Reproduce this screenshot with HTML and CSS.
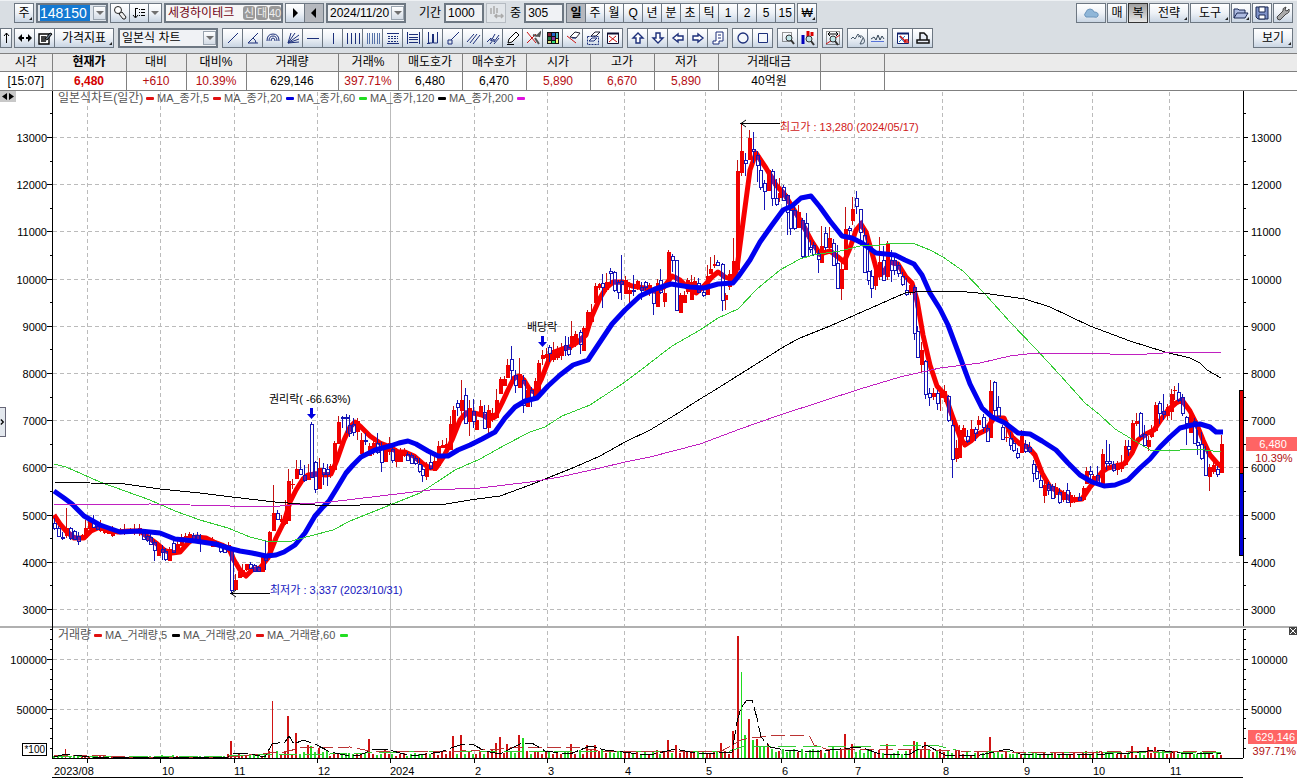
FILE: index.html
```html
<!DOCTYPE html>
<html lang="ko">
<head>
<meta charset="utf-8">
<title>세경하이테크 148150</title>
<link rel="stylesheet" href="styles.css">
</head>
<body>
<header class="bars">
  <div class="bar">
    <button class="btn more">주</button>
    <div class="box code"><input class="code-input" aria-label="종목코드" value="148150"><button class="drop" aria-label="종목 목록"></button></div>
    <div class="group">
      <button class="btn" aria-label="검색"><svg class="ic" viewBox="0 0 16 16"><circle cx="6" cy="5" r="3.5" fill="#fff" stroke="#222"/><path d="M8 8l2-1 4 5-1 2-2 0-4-5z" fill="#eee" stroke="#222"/></svg></button>
      <button class="btn" aria-label="정렬"><svg class="ic" viewBox="0 0 16 16"><path d="M4.5 3v9M2 10l2.500 3 2.500-3M4 3.500h3" fill="none" stroke="#000"/><path d="M8 4.500h1M8 7.500h1M8 10.500h1M10 4.500h4M10 7.500h4M10 10.500h4" stroke="#000"/></svg></button>
      <button class="btn slim" aria-label="정렬 선택"><span class="tri"></span></button>
    </div>
    <div class="box name"><span>세경하이테크</span><b>신</b><b>대</b><b>40</b></div>
    <div class="group">
      <button class="btn" aria-label="다음"><svg class="ic" viewBox="0 0 16 16"><path d="M6 3l5 5-5 5z"/></svg></button>
      <button class="btn pressed" aria-label="이전"><svg class="ic" viewBox="0 0 16 16"><path d="M10 3L5 8l5 5z"/></svg></button>
    </div>
    <div class="box date"><input aria-label="날짜" value="2024/11/20"><button class="drop" aria-label="날짜 선택"></button></div>
    <label class="lead" for="period">기간</label>
    <input class="box num" id="period" value="1000">
    <button class="btn faded" aria-label="기간 맞춤"><svg class="ic" viewBox="0 0 16 16"><path d="M3 3v6M6 1v8M9 3v5M7 11h8M9 9l-2 2 2 2M13 9l2 2-2 2" fill="none" stroke="#aaa" stroke-width="1.5"/></svg></button>
    <label for="count">중</label>
    <input class="box num" id="count" value="305">
    <div class="group">
      <button class="btn pressed strong">일</button><button class="btn">주</button><button class="btn">월</button><button class="btn">Q</button><button class="btn">년</button><button class="btn">분</button><button class="btn">초</button><button class="btn">틱</button><button class="btn">1</button><button class="btn">2</button><button class="btn">5</button><button class="btn">15</button>
    </div>
    <button class="btn more">₩</button>
    <div class="right">
      <button class="btn w30" aria-label="클라우드"><svg class="ic" viewBox="0 0 16 16"><path d="M3 12q-3-2 0-5 1-3 4-3t4 3q5 0 4 4-1 2-4 1z" fill="#8fb6d8" stroke="#6d96bd"/></svg></button>
      <button class="btn">매</button>
      <button class="btn dark">복</button>
      <button class="btn w40 more">전략</button>
      <button class="btn w40 more">도구</button>
      <button class="btn more" aria-label="열기"><svg class="ic" viewBox="0 0 16 16"><path d="M1 13V4h4l1 1h6v3M1 13L4 8h11l-3 5z" fill="#aebbe0" stroke="#1c2a55"/></svg></button>
      <button class="btn" aria-label="저장"><svg class="ic" viewBox="0 0 16 16"><path d="M2 2h12v12H4l-2-2z" fill="#7f92c8" stroke="#1c2a55"/><path d="M5 2h6v5H5zM5 10h6v4H5z" fill="#fff" stroke="#1c2a55"/></svg></button>
      <button class="btn" aria-label="설정"><svg class="ic" viewBox="0 0 16 16"><path d="M2 12l6-6q-1-3 3-4l-1 3 2 1 2-2q1 4-3 5l-6 6q-3 0-3-3z" fill="#aaa" stroke="#444"/></svg></button>
    </div>
  </div>
  <div class="bar second">
    <button class="btn slim" aria-label="위로"><svg class="ic" viewBox="0 0 16 16"><path d="M8.500 13V3M6 6l2.500-3L11 6" fill="none" stroke="#000"/></svg></button>
    <div class="group">
      <button class="btn" aria-label="좌우 이동"><svg class="ic" viewBox="0 0 16 16"><path d="M1 8l4-4v3h2v2H5v3zM15 8l-4-4v3H9v2h2v3z"/></svg></button>
      <button class="btn" aria-label="설정 편집"><svg class="ic" viewBox="0 0 16 16"><path d="M2 4h10v10H2zM4 7h5M4 9h4M4 11h5" fill="#fff" stroke="#000" stroke-width="1.4"/><path d="M8 9l5-6 2 1-5 6z" fill="#678" stroke="#000"/></svg></button>
      <button class="btn w60 more">가격지표</button>
    </div>
    <div class="box type"><select aria-label="차트 종류"><option>일본식 차트</option></select><span class="drop"></span></div>
    <div class="group" id="tools-a"></div>
    <div class="group" id="tools-b"></div>
    <div class="group" id="tools-c"></div>
    <div class="group" id="tools-d"></div>
    <div class="group" id="tools-e"></div>
    <div class="group" id="tools-f"></div>
    <div class="group" id="tools-g"></div>
    <div class="right"><button class="btn w40 more">보기</button></div>
  </div>
</header>
<table class="quote">
  <colgroup><col class="c52"><col class="c74"><col class="c60"><col class="c60"><col class="c92"><col class="c60"><col class="c64"><col class="c64"><col class="c64"><col class="c64"><col class="c64"><col class="c102"><col class="c64"><col></colgroup>
  <thead><tr><th>시각</th><th class="bold">현재가</th><th>대비</th><th>대비%</th><th>거래량</th><th>거래%</th><th>매도호가</th><th>매수호가</th><th>시가</th><th>고가</th><th>저가</th><th>거래대금</th><th></th><th></th></tr></thead>
  <tbody><tr><td>[15:07]</td><td class="up bold">6,480</td><td class="up">+610</td><td class="up">10.39%</td><td>629,146</td><td class="up">397.71%</td><td>6,480</td><td>6,470</td><td class="up">5,890</td><td class="up">6,670</td><td class="up">5,890</td><td>40억원</td><td></td><td></td></tr></tbody>
</table>
<main class="chart">
  <svg id="chart" viewBox="0 91 1297 687" role="img" aria-label="일봉 차트"></svg>
  <button class="split" aria-label="축 너비 조절"><svg viewBox="0 0 16 11"><path d="M7 2v7L2 5.500zM9 2v7l5-3.500z"/></svg></button>
  <button class="side" aria-label="패널 열기"><svg viewBox="0 0 6 30"><path d="M1 12l3 3-3 3" fill="none" stroke="#000" stroke-width="1.500"/></svg></button>
  <button class="close" aria-label="닫기"><svg viewBox="0 0 8 8"><path d="M1 1l6 6M7 1L1 7" stroke="#fff"/></svg></button>
</main>
<script src="chart.js"></script>
</body>
</html>
```
FILE: styles.css
```css
* { box-sizing: border-box; }
body {
  margin: 0;
  background: #fff;
  color: #000;
  font: 12px/16px "Liberation Sans", "Noto Sans CJK KR", sans-serif;
}
button, input, select { font: inherit; color: inherit; }
.bars {
  background: #d9dee3;
  border-top: 1px solid #eef1f4;
  padding: 2px 4px 5px 0;
}
.bar {
  display: flex;
  align-items: center;
  gap: 2px;
  height: 20px;
  padding-left: 14px;
  white-space: nowrap;
}
.second { margin-top: 5px; padding-left: 0; gap: 4px; }
.right { display: flex; gap: 1px; margin-left: auto; }
.group { display: flex; }
.group .btn + .btn { margin-left: -1px; }
.btn {
  position: relative;
  display: flex;
  align-items: center;
  justify-content: center;
  width: 20px;
  height: 20px;
  padding: 0;
  border: 1px solid #6d7782;
  background: linear-gradient(#fff, #eef2f7 50%, #c9d5e3);
  flex: none;
}
.second .group .btn { width: 21px; }
.second .group .w60 { width: 60px; }
.slim { width: 14px; }
.second > .slim { width: 12px; margin-right: -2px; }
.w30 { width: 30px; }
.w40 { width: 40px; }
.pressed { background: #b5b8be; }
.strong { font-weight: bold; }
.dark { background: linear-gradient(#a0a0a0, #e6e6e6); border-color: #333; }
.faded { border-color: #b5bbc2; background: #e2e6ea; margin-right: 2px; }
.more::after {
  content: "";
  position: absolute;
  right: 1px;
  bottom: 2px;
  border-left: 3px solid transparent;
  border-bottom: 3px solid #222;
}
.ic { width: 16px; height: 16px; display: block; flex: none; }
.box {
  display: flex;
  align-items: center;
  height: 20px;
  border: 2px solid #6d7782;
  background: #f0f2f5;
  padding: 0 0 0 2px;
  flex: none;
}
.box input { border: 0; background: none; padding: 0; width: 100%; min-width: 0; height: 16px; }
.code { width: 72px; background: #dfe5ec; }
.box .code-input { width: 50px; flex: none; background: #1479d2; color: #fff; font-size: 14px; }
.drop {
  width: 13px;
  height: 14px;
  padding: 0;
  border: 1px solid #9aa4af;
  background: linear-gradient(#fff, #d3dbe5);
  margin-left: auto;
  flex: none;
  display: flex;
  align-items: center;
  justify-content: center;
  pointer-events: none;
}
.drop::before, .tri {
  content: "";
  border: 4px solid transparent;
  border-bottom: 0;
  border-top: 4px solid #707070;
}
.name { width: 119px; color: #700010; gap: 1px; background: #f6f6f6; }
.name span { margin-right: auto; }
.name b {
  background: #999;
  color: #eee;
  border-radius: 3px;
  font-weight: normal;
  width: 12px;
  height: 14px;
  font-size: 11px;
  line-height: 14px;
  text-align: center;
}
.date { width: 80px; }
.lead { margin-left: 11px; }
label { margin-right: 1px; }
.num { width: 40px; }
.type { width: 100px; }
.type select { appearance: none; border: 0; background: none; padding: 0; width: 80px; height: 16px; line-height: 16px; }

.quote {
  width: 100%;
  table-layout: fixed;
  border-collapse: collapse;
  line-height: 17px;
}
.quote th, .quote td {
  height: 18px;
  padding: 0;
  border: 1px solid #808080;
  text-align: center;
  font-weight: normal;
}
.quote td { height: 19px; }
.quote th:first-child, .quote td:first-child { border-left: 0; }
.quote th:last-child, .quote td:last-child { border-right: 0; }
.quote th { background: #ebebeb; }
.quote .up { color: #b40d12; }
.quote .bold { font-weight: bold; }
.quote td.bold { color: #d40000; }
.c52 { width: 52px; }
.c60 { width: 60px; }
.c64 { width: 64px; }
.c74 { width: 74px; }
.c92 { width: 92px; }
.c102 { width: 102px; }

.chart { position: relative; }
#chart { display: block; width: 100%; height: auto; font-size: 11px; }
.chart button { position: absolute; padding: 0; border: 0; display: flex; }
.chart button svg { width: 100%; height: 100%; }
.chart .split { left: 0; top: 0; width: 16px; height: 11px; background: #c8c8c8; }
.chart .side { left: 0; top: 46%; width: 6px; height: 30px; background: #e3e8ee; border: 1px solid #667; border-left: 0; }
.chart .close { right: 0; top: 78%; width: 8px; height: 8px; background: #444; }
.sharp { shape-rendering: crispEdges; }
.ko { font-size: 12px; }
.tiny { font-size: 10px; }
.legend { fill: #555; }
.end { text-anchor: end; }
.mid { text-anchor: middle; }
```
FILE: chart.js
```javascript
// Toolbar drawing tools: each entry is the SVG body of one 16x16 icon.
const P = (d, c = '#1c2f7a', f = 'none', w = 1) => `<path d="${d}" stroke="${c}" fill="${f}" stroke-width="${w}"/>`;
const glass = (x, y) => `<circle cx="${x}" cy="${y}" r="3" fill="#bfe6e8" stroke="#333"/>` + P(`M${x + 2} ${y + 2}l3 4`, '#333', 'none', 2);
const tools = {
  a: [
    ['추세선', P('M3 13L13 3')],
    ['각도선', P('M13 3L3 13H13M8 8q3 2 3 5')],
    ['원호', P('M2 11q0-7 6-7t6 7M4 11q0-5 4-5t4 5M6 11q0-3 2-3t2 3')],
    ['팬', P('M3 13L6 3M3 13L10 3M3 13L14 5M3 13L14 9M3 13L14 12')],
    ['수평선', P('M2 8.5H14')],
    ['수직선', P('M8.5 3V14')],
    ['수직 등분', P('M2.5 3V14M6.5 3V14M10.5 3V14M14.5 3V14')],
    ['수직 분할', P('M2.5 3V14M4.5 3V14M7.5 3V14M9.5 3V14M12.5 3V14M14.5 3V14', '#5672a8')],
    ['수평 분할', P('M2 3.5H14M2 13.5H14') + '<path d="M3 6.5H13M3 8.5H13M3 11.5H13" stroke="#1c2f7a" stroke-dasharray="2 1"/>'],
    ['수평 등분', P('M2.5 2V14M14.5 2V14M4 4.5H13M4 7.5H13M4 9.5H13M4 12.5H13')],
    ['삼선', P('M3.5 2v11h4V4M8.5 4v9h4V2M2 13.5h3')],
    ['연결선', P('M6 10L14 2M3 10h4v4H3z')],
    ['평행선', P('M2 12L9 4M5 13L12 4M8 14L15 5')],
    ['평행 채널', P('M2 12l4-4v3l4-7M5 14l4-5v3l5-7M9 14l5-6')],
    ['펜', P('M3 13l1-4 7-7 3 3-7 7zM2 14.5H9', '#000', '#fff')],
    ['도구', P('M2 2L11 13M2 13l9-9', '#c11') + P('M8 5l4 1 3-3-1 4M10 8l4 6', '#555', 'none', 2)],
    ['색상', '<path d="M2 2h12v12H2z" fill="#111"/><path d="M3 3h3v3H3z" fill="#823"/><path d="M7 3h3v3H7z" fill="#26c"/><path d="M11 3h2v5h-2z" fill="#5bb"/><path d="M3 7h3v3H3z" fill="#274"/><path d="M7 7h3v3H7z" fill="#839"/><path d="M3 11h3v2H3z" fill="#dd8"/><path d="M7 11h3v2H7z" fill="#3d7"/><path d="M11 9h2v4h-2z" fill="#ff7"/>'],
    ['지우개', P('M5 7l5-5 5 1-4 5z', '#223', '#fff') + P('M2 6l9 7', '#c11') + P('M7 8h4')],
    ['전체 지우기', P('M6 6l4-4h5l-4 4z', '#223', '#fff') + '<path d="M2.5 6.5h11v8h-11z" fill="none" stroke="#1c2f7a" stroke-dasharray="2 1"/>' + P('M4 11l3-3h5l-3 3z')],
    ['차트 지우기', P('M2.5 3.5h11v10h-11z', '#113', '#fff') + P('M2 3.5H14', '#113', 'none', 2) + P('M4 6l8 6M4 12l7-6', '#c11')]
  ],
  b: [
    ['위', P('M8 3l5 5h-3v5H6V8H3z', '#1c2f7a', '#fff', 1.4)],
    ['아래', P('M8 13l5-5h-3V3H6v5H3z', '#1c2f7a', '#fff', 1.4)],
    ['왼쪽', P('M3 8l5-4v2h5v4H8v2z', '#1c2f7a', '#fff', 1.4)],
    ['오른쪽', P('M13 8L8 4v2H3v4h5v2z', '#1c2f7a', '#fff', 1.4)],
    ['메모', P('M6 2h7v9H9v3H3v-3h3zM8 5h3M8 8h3', '#1c2f7a', '#fff')]
  ],
  c: [['원', '<circle cx="8" cy="8" r="5" fill="#f4f7fb" stroke="#1c2f7a" stroke-width="1.3"/>'], ['사각형', P('M3.5 3.5h9v9h-9z', '#1c2f7a', '#f4f7fb')]],
  d: [
    ['영역 확대', '<path d="M2.5 2.5h9v9h-9z" fill="none" stroke="#333" stroke-dasharray="1 1"/>' + glass(9, 8)],
    ['봉 확대', P('M3 5v9', '#00b', 'none', 3) + P('M8 1v7M12 2v4', '#d00', 'none', 3) + glass(9, 9)]
  ],
  e: [['전체 보기', '<path d="M1.5 1.5h13v13h-13z" fill="none" stroke="#333" stroke-dasharray="1 1"/>' + P('M3 4h10M5 2L3 4l2 2M11 2l2 2-2 2', '#000') + P('M1 14L15 5', '#c11') + glass(8, 9)]],
  f: [['파동', P('M1 9l2-2 2 2 3-5 3 4M8 7q4-3 6 2t-4 5l3-6', '#456')], ['지그재그', P('M1 9l3-2 2 3 2-5 2 5 2-4 2 3', '#345') + P('M1 11.5h13', '#5672d8')]],
  g: [
    ['차트 저장', P('M2.5 3.5h11v10h-11z', '#11206a', '#fff') + P('M2 3.5H14', '#11206a', 'none', 2) + P('M4 6l5 6M4 12l6-6', '#27c') + P('M5 6l6 6M9 12h5M10 10h3', '#c11', 'none', 1.5)],
    ['인쇄', P('M5 10V3h4l3 3v4zM2 10h12v3H2z', '#111', '#e8edf6', 1.5)]
  ]
};
for (const key in tools) {
  document.getElementById('tools-' + key).innerHTML = tools[key]
    .map(([label, body]) => `<button class="btn" aria-label="${label}"><svg class="ic" viewBox="0 0 16 16">${body}</svg></button>`).join('');
}

// Candles: x high bodyTop bodyBottom low
const up = `66 508 528 536 538|82 534 535 538 539|85 520 528 538 538|89 518 521 529 529|100 520 526 531 532|104 529 530 533 534|108 529 530 534 534|112 526 531 536 537|116 529 530 533 534|120 528 530 532 533|124 524 529 531 535|130 528 530 532 534|134 524 529 532 535|139 524 528 533 536|158 543 545 556 556|169 547 549 561 561|177 540 544 553 553|181 534 537 546 546|185 533 536 542 543|189 532 534 541 541|204 536 537 543 544|208 537 540 543 545|212 537 540 547 547|228 542 545 552 552|235 574 580 590 590|239 570 572 578 578|242 564 570 577 577|246 564 564 570 571|262 556 557 572 572|269 531 532 557 557|273 485 513 531 531|281 515 519 522 523|285 500 515 524 525|288 469 481 521 521|292 479 484 485 489|296 460 469 479 479|308 464 474 480 480|319 458 468 489 489|330 464 466 475 478|334 441 443 470 470|338 416 422 444 444|357 418 421 432 440|361 433 440 454 454|369 443 446 456 456|373 437 443 450 455|385 443 447 462 462|389 437 443 452 455|396 448 450 462 467|400 448 450 462 462|404 448 450 456 457|426 462 466 477 480|434 456 461 471 471|438 441 446 466 466|442 440 445 448 448|446 438 444 448 450|450 416 424 450 450|453 406 410 433 433|461 380 400 411 415|469 400 408 422 436|476 414 420 430 430|480 400 406 415 417|488 405 410 428 438|492 408 413 420 422|496 389 400 418 418|500 377 379 394 394|504 376 379 386 386|507 359 365 378 378|519 358 374 388 388|527 386 390 407 407|535 378 381 399 399|538 360 363 394 394|542 350 355 359 365|546 348 354 358 362|553 342 350 360 362|557 346 350 358 360|561 343 350 356 360|571 321 336 347 350|575 331 334 345 347|583 326 328 351 351|587 310 312 330 330|591 304 312 322 322|595 283 286 303 303|599 283 284 288 290|606 273 282 290 292|625 276 280 294 294|629 282 290 294 303|637 280 281 288 290|649 283 285 292 296|657 279 283 307 307|664 288 293 302 307|668 250 252 283 283|680 293 295 313 313|684 291 295 303 303|687 278 280 292 294|691 275 282 300 300|694 277 281 290 292|707 265 276 295 295|710 257 269 274 274|714 255 264 266 268|725 293 295 300 310|729 270 274 287 290|733 238 261 282 282|737 160 171 270 270|741 124 151 173 176|749 130 138 160 160|768 168 170 191 191|779 178 193 198 202|798 205 212 228 228|821 226 246 263 263|829 227 238 248 250|841 262 269 289 300|845 207 229 270 270|852 197 209 221 225|875 262 265 286 290|879 237 262 277 280|887 241 243 277 280|910 280 285 293 295|921 342 350 365 372|933 388 393 397 400|940 390 393 398 411|944 385 391 398 402|956 440 448 459 462|959 425 430 458 458|963 425 428 437 447|971 420 429 441 441|978 416 420 425 430|990 380 391 438 438|1006 430 437 438 442|1021 430 436 453 453|1044 478 485 496 503|1055 483 487 495 498|1063 490 492 500 502|1070 492 495 503 507|1074 495 497 502 503|1083 486 488 500 501|1086 467 471 484 484|1093 474 476 480 482|1102 449 454 486 486|1117 461 463 470 475|1121 455 464 469 472|1125 440 446 465 465|1132 420 423 453 453|1136 413 421 424 426|1148 436 440 447 451|1151 425 430 437 438|1155 402 405 431 431|1167 404 407 416 420|1171 389 394 412 420|1174 386 390 391 400|1190 412 415 433 433|1209 464 467 477 491|1213 460 465 472 474|1221 435 444 473 473`;
const down = `54 518 523 528 530|58 526 528 536 537|62 532 537 538 540|70 527 528 538 540|74 530 531 539 540|78 532 536 541 545|93 515 521 527 528|97 525 526 529 530|143 529 533 539 540|147 535 536 540 542|150 532 537 544 545|154 540 542 550 561|162 545 549 552 560|165 548 551 559 561|173 540 543 552 553|193 533 535 540 541|197 532 535 541 542|200 534 541 542 552|216 541 542 546 547|220 546 547 551 553|224 547 548 552 552|231 548 550 590 594|250 562 564 568 569|254 564 565 571 572|258 566 567 571 572|265 540 557 560 570|277 510 513 519 519|300 460 469 474 475|304 465 475 480 482|311 422 424 477 477|315 461 462 489 493|323 463 468 474 485|327 464 469 474 486|342 416 417 418 428|346 414 417 418 433|349 415 425 433 437|353 418 424 432 436|365 433 440 441 445|377 433 443 452 454|381 442 448 462 472|392 446 449 460 463|407 452 454 460 461|411 453 455 463 464|415 456 458 463 465|419 458 464 471 473|422 465 469 475 482|430 452 462 468 470|457 400 403 407 416|465 388 395 423 423|473 399 411 421 428|484 405 412 428 428|511 346 359 370 380|515 370 375 385 393|523 375 380 405 413|531 387 390 398 407|549 345 347 353 362|565 336 345 350 356|568 337 347 354 356|580 330 332 344 354|602 274 283 287 308|610 268 271 273 284|614 271 272 290 292|618 280 282 292 299|621 255 281 284 300|633 275 290 291 296|641 282 287 290 300|645 281 282 287 290|653 287 289 303 315|660 269 280 292 294|672 254 256 260 272|676 260 260 310 310|698 278 283 292 293|703 290 292 295 297|717 260 262 265 266|722 263 264 300 311|745 153 160 163 176|753 132 149 151 163|757 151 155 165 182|760 160 170 187 190|764 180 183 191 210|772 169 171 198 206|776 179 198 204 206|783 185 187 200 200|787 194 195 212 235|790 208 210 228 235|794 205 210 228 230|802 218 220 256 258|806 213 223 256 256|810 240 247 249 253|813 242 245 254 256|818 250 253 259 273|825 227 233 247 250|833 239 243 265 266|837 245 263 288 288|849 226 228 230 240|856 191 198 206 214|860 209 209 232 242|864 228 235 272 272|868 243 271 280 285|871 270 276 288 298|883 246 260 280 280|891 250 260 270 282|894 255 260 270 275|898 262 265 273 277|902 272 276 284 286|906 278 290 294 296|914 285 287 333 340|917 326 331 357 358|925 360 361 394 399|929 388 393 397 406|937 390 393 403 410|948 395 396 420 422|952 420 425 459 478|967 430 436 441 443|975 427 429 433 441|983 414 417 427 432|987 425 428 441 442|994 381 382 410 418|998 396 407 416 420|1002 425 427 439 440|1010 432 438 445 450|1013 440 443 450 452|1017 448 453 457 459|1025 440 444 451 453|1029 442 447 451 453|1033 460 464 473 482|1036 466 471 478 480|1040 475 480 487 488|1048 482 484 490 495|1052 484 486 498 498|1059 488 492 502 504|1067 483 490 502 502|1079 493 497 500 501|1090 466 471 474 480|1097 466 475 484 484|1106 440 461 463 470|1109 444 461 463 466|1113 461 464 470 472|1128 440 446 449 456|1140 412 413 436 438|1144 425 434 445 446|1159 401 403 413 424|1163 394 411 414 420|1178 383 392 400 402|1182 394 397 413 416|1186 416 417 423 445|1194 418 421 443 443|1197 430 442 445 455|1201 432 444 458 460|1205 446 450 475 475|1217 466 469 474 477`;
const parse = s => s.split('|').map(r => r.split(' ').map(Number));
const ma5 = '54,515 60,524 66,531 74,538 84,538 91,531 100,527 108,530 118,532 128,531 140,531 148,537 156,543 164,550 172,553 180,552 188,543 196,537 206,538 214,542 222,545 229,549 234,560 240,570 246,576 252,570 260,568 268,558 276,538 284,522 290,502 296,490 303,479 308,475 316,474 326,475 331,474 337,460 344,440 350,427 355,422 361,427 370,436 380,443 388,446 398,452 405,452 414,456 422,463 430,468 436,468 444,456 452,440 460,420 466,413 474,413 482,415 490,419 495,417 502,403 508,390 514,378 519,376 524,380 530,390 535,392 541,380 548,362 554,352 562,349 570,347 578,342 586,335 592,316 600,298 606,288 613,282 622,282 632,286 644,288 655,291 664,287 672,276 680,280 688,288 696,293 704,286 712,277 718,272 725,277 733,280 737,268 744,215 750,170 756,153 766,168 776,185 785,195 793,208 803,225 811,240 820,254 830,251 838,257 844,262 850,248 856,230 861,224 866,232 872,253 878,275 884,272 890,262 898,264 906,277 912,283 917,300 923,335 930,365 937,386 945,395 952,415 960,437 965,445 971,441 978,434 986,430 994,418 1004,418 1012,437 1020,444 1028,447 1035,455 1042,473 1050,487 1060,492 1072,500 1082,499 1090,487 1096,480 1102,472 1108,468 1116,466 1124,464 1132,453 1138,440 1146,434 1154,430 1160,421 1168,410 1176,403 1182,400 1190,411 1197,425 1203,440 1210,455 1217,463 1222,467';
const ma20 = '54,491 64,498 72,504 84,516 100,525 120,532 140,531 160,533 175,539 195,541 215,544 232,549 240,551 252,553 266,556 276,555 284,552 295,545 305,533 315,516 322,508 329,501 337,488 346,473 353,465 361,457 375,450 390,446 399,443 408,441 416,444 428,451 438,456 448,456 458,450 470,445 482,439 495,432 505,418 515,407 525,401 537,398 548,386 560,375 573,365 588,360 598,345 612,324 625,310 640,296 655,289 671,284 690,287 704,288 718,284 733,283 738,277 750,260 760,242 772,225 783,210 792,206 801,198 811,196 820,207 830,221 842,236 852,238 862,243 876,253 895,255 905,260 914,264 922,275 930,293 940,309 948,325 960,357 970,384 982,408 992,417 1005,423 1018,433 1030,434 1042,441 1056,450 1068,463 1080,475 1092,482 1104,486 1115,485 1128,480 1140,468 1150,459 1160,447 1170,437 1180,428 1192,425 1200,424 1210,427 1216,432 1223,432';
const ma60 = '54,464 66,467 82,474 100,482 125,491 150,500 175,511 200,520 228,528 250,537 266,541 288,542 310,536 333,530 350,521 390,505 420,493 440,480 455,470 480,459 505,445 530,432 545,427 562,416 590,405 625,382 650,363 672,346 700,330 718,318 738,309 757,289 780,270 800,259 813,255 840,251 860,246 880,245 892,243 915,244 930,250 943,257 963,271 985,294 1010,322 1035,348 1060,375 1085,403 1100,415 1115,429 1135,441 1150,450 1170,451 1190,449 1205,450 1221,452';
const ma120 = '54,482 90,483 125,484 160,489 200,493 232,497 275,502 300,504 330,506 360,505 390,504 440,505 470,500 500,496 530,485 550,477 575,467 600,456 625,442 650,430 675,415 700,399 715,390 750,368 785,346 800,338 830,326 855,315 880,304 905,293 925,291 955,291 990,294 1025,299 1050,307 1090,326 1130,341 1165,352 1190,358 1200,363 1207,370 1221,378';
const ma200 = '54,505 150,504 190,505 270,507 300,504 330,502 380,496 430,490 480,488 530,482 560,477 600,468 625,462 650,457 700,444 740,429 780,415 820,402 860,389 900,377 940,368 980,363 1010,356 1035,353 1090,353 1130,355 1180,352 1221,352';

let out = '';
const line = (x1, y1, x2, y2, c = '#000', extra = '') => `<path class="sharp" d="M${x1} ${y1}L${x2} ${y2}" stroke="${c}" ${extra}/>`;
const rect = (x, y, w, h, c, extra = '') => `<rect class="sharp" x="${x}" y="${y}" width="${w}" height="${h}" fill="${c}" ${extra}/>`;
const text = (x, y, s, cls = '', c = '#000') => `<text x="${x}" y="${y}" class="${cls}" fill="${c}">${s}</text>`;
const poly = (pts, c, w, extra = '') => `<polyline points="${pts}" fill="none" stroke="${c}" stroke-width="${w}" ${extra}/>`;
const dash = 'stroke-dasharray="4 3"';

// Grid and axes
const prices = [];
for (let p = 3000; p <= 13500; p += 500) {
  const y = Math.round(137 + (13000 - p) * 0.0472) + 0.5;
  const major = p % 1000 === 0;
  if (major) {
    out += line(53, y, 1243, y, '#bbb', dash);
    prices.push([y, p]);
  }
  out += line(major ? 47 : 50, y, 53, y) + line(1243, y, major ? 1248 : 1246, y);
}
const months = [[87, '2023/08', 54], [160, '10', 162], [234, '11', 234], [317, '12', 318], [390, '2024', 390], [474, '2', 475], [547, '3', 548], [624, '4', 625], [705, '5', 706], [781, '6', 782], [854, '7', 855], [942, '8', 943], [1023, '9', 1024], [1092, '10', 1093], [1169, '11', 1170]];
for (const [x, label, tx] of months) {
  out += line(x + 0.5, 92, x + 0.5, 758, '#bbb', label === '2024' ? '' : dash) + line(x + 0.5, 758, x + 0.5, 763) + text(tx, 775, label);
}
for (let v = 1; v <= 13; v++) {
  const y = Math.round(758 - v * 9.9) + 0.5, major = v % 5 === 0;
  if (major) out += line(53, y, 1243, y, '#bbb', dash) + text(47, y + 4, v * 10000, 'end') + text(1251, y + 4, v * 10000);
  out += line(major ? 47 : 50, y, 53, y) + line(1243, y, major ? 1248 : 1246, y);
}
for (const [y, p] of prices) out += text(47, y + 4, p, 'end') + text(1251, y + 4, p);

// Volume
const ups = parse(up), downs = parse(down);
const bigUp = { 66: 9, 231: 17, 273: 57, 288: 42, 296: 25, 308: 13, 319: 10, 369: 19, 385: 9, 453: 22, 461: 23, 496: 15, 500: 21, 507: 14, 519: 23, 571: 14, 587: 13, 595: 13, 668: 18, 676: 13, 721: 15, 733: 27, 737: 122, 749: 39, 768: 14, 757: 19, 845: 24, 852: 14, 887: 14, 914: 17, 925: 16, 990: 21, 1132: 12, 1148: 11, 1155: 11 };
const bigDown = { 311: 12, 523: 20, 741: 86, 745: 23, 753: 18, 760: 12, 764: 12, 917: 16 };
const calm = x => x < 228 ? 2 : x < 268 ? 3 : x < 330 ? 6 : x < 440 ? 4 : x < 735 ? 6 : x < 840 ? 8 : x < 960 ? 7 : 5;
const volumes = [...ups.map(c => [c[0], 1]), ...downs.map(c => [c[0], 0])];
for (const [x, isUp] of volumes) {
  if (bigUp[x] || bigDown[x]) continue;
  const h = Math.max(1, Math.round(calm(x) * (0.6 + (x * 37 % 11) / 14)));
  out += rect(x - 1, 758 - h, 2, h, isUp ? '#c81818' : '#30d830');
}
for (const x in bigUp) out += rect(x - (x == 737 ? 0 : 1), 758 - bigUp[x], x == 66 || x == 273 ? 1 : 2, bigUp[x], '#d01414');
for (const x in bigDown) out += rect(x - (x == 741 ? 0 : 1), 758 - bigDown[x], x == 741 ? 1 : 2, bigDown[x], '#20dc20');
out += poly('54,756 228,756 270,754 330,754 400,752 500,751 620,751 730,751 742,747 880,746 895,745 935,745 960,751 1010,752 1221,753', '#3c3', 1, 'class="sharp" stroke-dasharray="18 7"');
out += poly('54,756 90,755 130,757 228,757 270,753 285,752 300,748 350,747 370,751 440,752 500,749 520,747 575,747 600,751 720,752 741,740 752,738 770,736 800,735 810,737 814,745 826,749 900,749 960,751 1060,753 1140,751 1221,752', '#b33', 1, 'class="sharp" stroke-dasharray="14 5"');
out += poly('54,757 66,754 90,757 228,757 235,753 250,754 265,757 272,744 285,742 289,736 294,744 303,740 315,744 330,752 345,755 360,755 372,750 386,749 400,753 412,756 440,752 460,745 472,744 485,751 500,754 520,744 532,743 545,751 570,754 590,746 605,750 640,754 650,755 675,749 700,754 732,752 737,722 741,708 746,701 752,700 757,718 761,737 770,747 785,750 810,752 860,747 880,754 910,754 926,745 945,755 980,755 1008,749 1020,754 1080,755 1130,753 1157,750 1180,753 1221,754', '#000', 1, 'class="sharp" stroke-dasharray="16 4"');

// Candles and price averages
const wick = (c, col) => line(c[0] + 0.5, c[1], c[0] + 0.5, c[4], col);
let outlines = '', clips = '';
for (const c of ups) out += wick(c, '#c41212') + rect(c[0] - 1, c[2], 4, Math.max(1, c[3] - c[2]), '#f00000');
for (const c of downs) {
  const h = Math.max(1, c[3] - c[2]);
  out += wick(c, '#1515b5') + rect(c[0] - 1, c[2], 3, h, '#fff');
  outlines += line(c[0] + 0.5, c[1], c[0] + 0.5, c[2], '#1515b5') + line(c[0] + 0.5, c[3], c[0] + 0.5, c[4], '#1515b5')
    + `<rect class="sharp" x="${c[0] - 0.5}" y="${c[2] + 0.5}" width="3" height="${h}" fill="none" stroke="#1515b5"/>`;
  clips += `<rect x="${c[0] - 1}" y="${c[2]}" width="4" height="${h + 1}"/>`;
}
out += `<clipPath id="bodies">${clips}</clipPath>`;
out += poly(ma5, '#f80000', 5, 'stroke-linejoin="round"') + poly(ma5, '#86108c', 5, 'clip-path="url(#bodies)"') + outlines;
out += poly(ma20, '#0000f0', 5, 'stroke-linejoin="round"');
out += poly(ma60, '#3c3', 1, 'class="sharp"') + poly(ma120, '#000', 1, 'class="sharp"') + poly(ma200, '#c020c0', 1, 'class="sharp"');

// Frames
out += rect(0, 626, 1297, 2, '#b0b0b0') + line(52.5, 91, 52.5, 758) + line(1243.5, 91, 1243.5, 626) + line(1243.5, 629, 1243.5, 758);
out += line(52, 758.5, 1243, 758.5) + line(52, 777.5, 1243, 777.5);
out += rect(1239, 390, 4, 166, '#000') + rect(1240, 391, 3, 82, '#e00000') + rect(1240, 474, 3, 81, '#0000d8');

// Legends: the panel title is a size larger than the series names
const legend = (y, items) => {
  items.forEach(([x, s, mx, c], i) => {
    out += text(x, y, s, i ? 'legend' : 'ko legend') + `<rect x="${mx}" y="${y - 5}" width="8" height="3" rx="1" fill="${c}"/>`;
  });
};
legend(102, [[58, '일본식차트(일간)', 146, '#e01010'], [157, 'MA_종가,5', 213, '#e01010'], [224, 'MA_종가,20', 286, '#00d'], [297, 'MA_종가,60', 359, '#2d2'], [370, 'MA_종가,120', 438, '#000'], [449, 'MA_종가,200', 517, '#e010e0']]);
legend(639, [[58, '거래량', 94, '#e01010'], [105, 'MA_거래량,5', 172, '#000'], [183, 'MA_거래량,20', 256, '#e01010'], [267, 'MA_거래량,60', 340, '#2d2']]);

// Annotations
const pin = (x, y) => `<path d="M${x - 1} ${y}h3v6h3l-4.5 5-4.5-5h3z" fill="#0000e0"/>`;
out += text(269, 403, '권리락( -66.63%)') + pin(311, 408) + text(527, 331, '배당락') + pin(542, 336);
out += line(740, 123.5, 780, 123.5) + poly('746,120 741,123.5 746,127', '#000', 1) + text(780, 131, '최고가 : 13,280 (2024/05/17)', '', '#d01818');
out += line(230, 593.5, 270, 593.5) + poly('236,590 231,593.5 236,597', '#000', 1) + text(270, 594, '최저가 : 3,337 (2023/10/31)', '', '#1414c0');
out += rect(1246, 437, 51, 14, '#ff6464') + text(1273, 448, '6,480', 'mid', '#fff') + rect(1252, 451, 44, 13, '#fff') + text(1274, 462, '10.39%', 'mid', '#b01010');
out += rect(1248, 730, 49, 14, '#ff6464') + text(1295, 741, '629,146', 'end', '#fff') + text(1296, 755, '397.71%', 'end', '#b01010');
out += rect(22.5, 743.5, 24, 12, '#fff', 'stroke="#000"') + text(45, 753, '*100', 'tiny end');
document.getElementById('chart').innerHTML = out;
```
